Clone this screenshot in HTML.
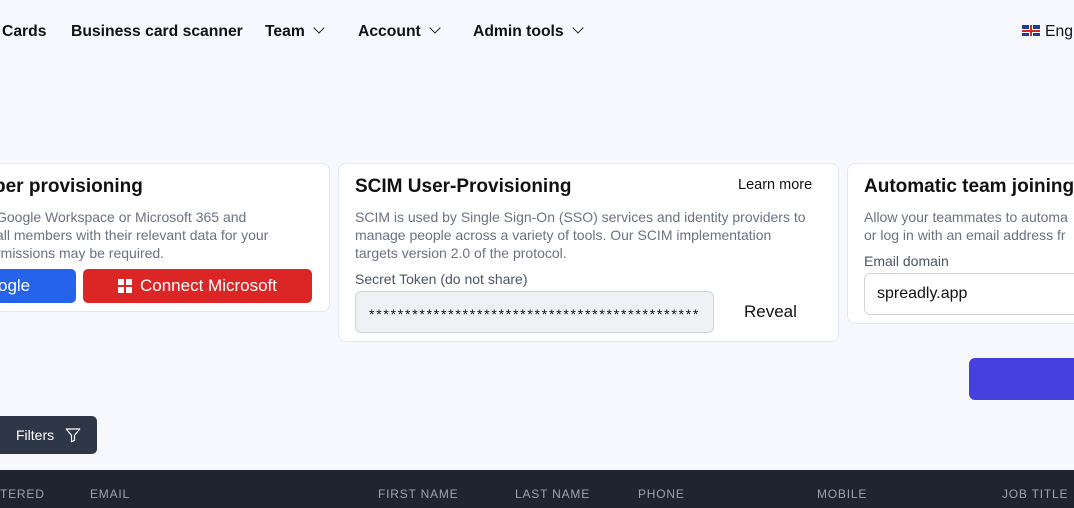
<!DOCTYPE html>
<html><head><meta charset="utf-8"><style>
*{box-sizing:border-box;margin:0;padding:0}
body{width:1074px;height:508px;overflow:hidden;background:#f7f8fd;font-family:"Liberation Sans",sans-serif;position:relative;color:#111}
.a{position:absolute}
.nav{font-size:15.7px;font-weight:bold;top:23px;color:#111;white-space:nowrap}
.chev{display:inline-block;width:8px;height:8px;border-right:1.6px solid #222;border-bottom:1.6px solid #222;transform:rotate(45deg);margin-left:10px;position:relative;top:-4px}
.card{background:#fff;border:1px solid #e2e5f5;border-radius:8px}
h2{font-size:19px;font-weight:bold;position:absolute;white-space:nowrap}
.p{font-size:14px;color:#6b7280;line-height:18px;position:absolute;white-space:nowrap}
.th{position:absolute;top:487px;font-size:12px;letter-spacing:0.8px;color:#9ca3af}
</style></head><body>
<div class="a nav" style="left:2px">Cards</div>
<div class="a nav" style="left:71px">Business card scanner</div>
<div class="a nav" style="left:265px">Team<span class="chev"></span></div>
<div class="a nav" style="left:358px">Account<span class="chev"></span></div>
<div class="a nav" style="left:473px">Admin tools<span class="chev"></span></div>
<div class="a" style="left:1022px;top:25px;width:18px;height:11px;background:#1d3f8f;overflow:hidden"><div style="position:absolute;left:7px;top:0;width:4px;height:11px;background:#fff"></div><div style="position:absolute;left:0;top:3.5px;width:18px;height:4px;background:#fff"></div><div style="position:absolute;left:8px;top:0;width:2px;height:11px;background:#d22"></div><div style="position:absolute;left:0;top:4.5px;width:18px;height:2px;background:#d22"></div></div>
<div class="a nav" style="left:1045px;font-weight:normal;color:#111">Eng</div>

<div class="a card" style="left:-10px;top:163px;width:340px;height:149px"></div>
<h2 style="left:-6px;top:176px">per provisioning</h2>
<div class="p" style="left:-4px;top:208px">Google Workspace or Microsoft 365 and<br>all members with their relevant data for your<br>rmissions may be required.</div>
<div class="a" style="left:-10px;top:269px;width:86px;height:34px;background:#2563eb;border-radius:5px;color:#fff;font-size:17px;line-height:34px;padding-left:8px">ogle</div>
<div class="a" style="left:83px;top:269px;width:229px;height:34px;background:#dc2626;border-radius:5px;color:#fff;font-size:17px;line-height:34px">
<div style="position:absolute;left:35px;top:10px;width:14px;height:14px;display:grid;grid-template-columns:6px 6px;gap:2px"><i style="background:#fff"></i><i style="background:#fff"></i><i style="background:#fff"></i><i style="background:#fff"></i></div>
<span style="position:absolute;left:57px">Connect Microsoft</span></div>

<div class="a card" style="left:338px;top:163px;width:501px;height:179px"></div>
<h2 style="left:355px;top:176px">SCIM User-Provisioning</h2>
<div class="a" style="left:738px;top:177px;font-size:14.5px;color:#111">Learn more</div>
<div class="p" style="left:355px;top:208px">SCIM is used by Single Sign-On (SSO) services and identity providers to<br>manage people across a variety of tools. Our SCIM implementation<br>targets version 2.0 of the protocol.</div>
<div class="p" style="left:355px;top:270px;color:#4b5563">Secret Token (do not share)</div>
<div class="a" style="left:355px;top:291px;width:359px;height:42px;background:#f0f1f4;border:1px solid #d1d5db;border-radius:6px;font-size:14px;line-height:44px;padding-left:13px;letter-spacing:1.75px;color:#111;overflow:hidden;white-space:nowrap">**********************************************</div>
<div class="a" style="left:744px;top:302px;font-size:17px">Reveal</div>

<div class="a card" style="left:847px;top:163px;width:240px;height:161px"></div>
<h2 style="left:864px;top:176px">Automatic team joining</h2>
<div class="p" style="left:864px;top:208px">Allow your teammates to automa<br>or log in with an email address fr</div>
<div class="p" style="left:864px;top:252px;color:#4b5563">Email domain</div>
<div class="a" style="left:864px;top:273px;width:220px;height:42px;background:#fff;border:1px solid #d1d5db;border-radius:6px;font-size:16px;line-height:40px;padding-left:12px">spreadly.app</div>
<div class="a" style="left:969px;top:358px;width:120px;height:42px;background:#4640de;border-radius:6px"></div>

<div class="a" style="left:-10px;top:416px;width:107px;height:38px;background:#2d3748;border-radius:5px;color:#fff;font-size:14px;line-height:38px;padding-left:26px">Filters
<svg style="position:absolute;left:74px;top:10px" width="18" height="18" viewBox="0 0 24 24" fill="none" stroke="#fff" stroke-width="1.6" stroke-linejoin="round"><path d="M3 4h18l-7 8.5V19l-4 2v-8.5z"/></svg></div>

<div class="a" style="left:0;top:470px;width:1074px;height:38px;background:#1f2430"></div>
<div class="th" style="left:0">TERED</div>
<div class="th" style="left:90px">EMAIL</div>
<div class="th" style="left:378px">FIRST NAME</div>
<div class="th" style="left:515px">LAST NAME</div>
<div class="th" style="left:638px">PHONE</div>
<div class="th" style="left:817px">MOBILE</div>
<div class="th" style="left:1002px">JOB TITLE</div>
</body></html>
